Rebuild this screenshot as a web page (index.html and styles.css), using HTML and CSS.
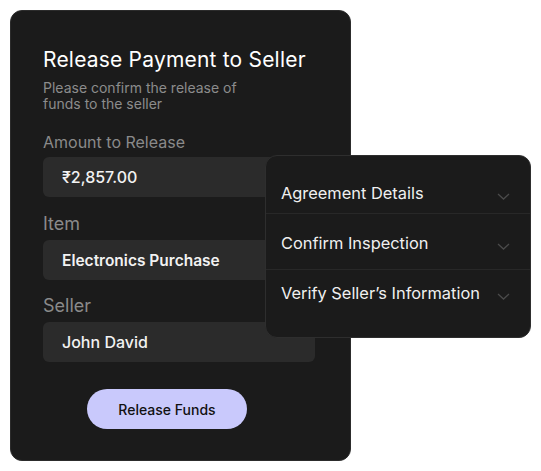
FILE: index.html
```html
<!DOCTYPE html>
<html>
<head>
<meta charset="utf-8">
<link rel="stylesheet" href="styles.css">
</head>
<body>
<div class="stage">
  <div class="card">
    <h1 class="title">Release Payment to Seller</h1>
    <p class="subtitle">Please confirm the release of funds to the seller</p>
    <div class="label label-amount">Amount to Release</div>
    <div class="field">₹2,857.00</div>
    <div class="label label-item">Item</div>
    <div class="field field-bold">Electronics Purchase</div>
    <div class="label label-seller">Seller</div>
    <div class="field">John David</div>
    <button class="btn">Release Funds</button>
  </div>
  <div class="popover">
    <div class="row row-1">
      <span>Agreement Details</span>
      <svg class="chev" width="13" height="7" viewBox="0 0 13 7"><path d="M1 1l5.5 5 5.5-5" fill="none" stroke="#4a4a4a" stroke-width="1.3"/></svg>
    </div>
    <div class="row row-2">
      <span>Confirm Inspection</span>
      <svg class="chev" width="13" height="7" viewBox="0 0 13 7"><path d="M1 1l5.5 5 5.5-5" fill="none" stroke="#4a4a4a" stroke-width="1.3"/></svg>
    </div>
    <div class="row row-3">
      <span>Verify Seller’s Information</span>
      <svg class="chev" width="13" height="7" viewBox="0 0 13 7"><path d="M1 1l5.5 5 5.5-5" fill="none" stroke="#4a4a4a" stroke-width="1.3"/></svg>
    </div>
  </div>
</div>
</body>
</html>
```
FILE: styles.css
```css
* { box-sizing: border-box; }
html, body { margin: 0; padding: 0; background: #ffffff; }
body { font-family: "Inter", "Open Sans", sans-serif; }
.stage { position: relative; width: 541px; height: 471px; padding: 10px 0 0 10px; }
.card {
  width: 341px; height: 451px;
  background: #1b1b1b;
  border: 1px solid #2c2c2c;
  border-radius: 12px;
  padding: 36px 0 0 32px;
  display: flex; flex-direction: column; align-items: flex-start;
}
.title {
  margin: 0; font-size: 21px; font-weight: 400; color: #ffffff;
  line-height: 26px; letter-spacing: 0.2px;
}
.subtitle {
  margin: 7px 0 0; width: 210px; font-size: 14px; line-height: 16px; color: #8c8c8c;
}
.label { color: #8a8a8a; font-size: 18px; line-height: 22px; }
.label-amount { font-size: 16px; line-height: 20px; margin-top: 20px; margin-bottom: 5px; }
.label-item { margin-top: 16px; margin-bottom: 5px; }
.label-seller { margin-top: 15px; margin-bottom: 5px; }
.field {
  width: 272px; height: 40px; border-radius: 6px;
  background: #2b2b2b; color: #f2f2f2;
  font-size: 16px; font-weight: 500;
  display: flex; align-items: center; padding-left: 19px;
}
.field-bold { font-weight: 600; font-size: 15.5px; }
.btn {
  margin: 27px 0 0 44px; width: 160px; height: 40px; border: none;
  border-radius: 20px; background: #c9c9fc; color: #111111;
  font-family: inherit; font-size: 14px; font-weight: 500;
}
.popover {
  position: absolute; left: 265px; top: 155px; width: 266px; height: 183px;
  background: #1b1b1b; border: 1px solid #2e2e2e; border-radius: 12px;
}
.row {
  display: flex; align-items: center; justify-content: space-between;
  padding: 0 20px 0 15px;
  color: #f0f0f0; font-size: 16.4px; line-height: 22px;
  border-bottom: 1px solid #282828;
}
.row-1 { padding-top: 26px; padding-bottom: 9px; }
.row-2 { padding-top: 18px; padding-bottom: 15px; }
.row-3 { padding-top: 12px; border-bottom: none; }
.chev { margin-top: 6px; }
```
